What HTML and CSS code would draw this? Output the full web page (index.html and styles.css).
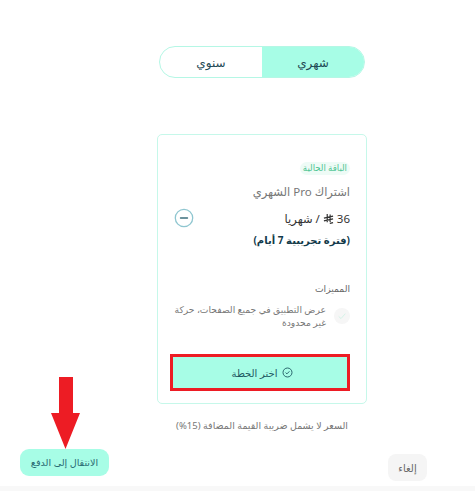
FILE: index.html
```html
<!DOCTYPE html>
<html lang="ar" dir="rtl">
<head>
<meta charset="utf-8">
<title>الخطط</title>
<link rel="stylesheet" href="styles.css">
</head>
<body>
<main class="page">
  <div class="content">
    <div class="toggle">
      <div class="tab tab-active">شهري</div>
      <div class="tab">سنوي</div>
    </div>
    <section class="card">
      <span class="badge">الباقة الحالية</span>
      <h2 class="plan">اشتراك Pro الشهري</h2>
      <div class="price-row">
        <span class="price">36
          <svg class="cur" viewBox="0 0 12 12" width="11" height="11"><path d="M4.6 1v9M7.8 1.6v8.2M1 5.6l10-2.2M1 8.6l10-2.2M7.4 11.4l3.6-.9" fill="none" stroke="#333" stroke-width="1.3"/></svg>
          / شهريا</span>
        <svg class="minus" viewBox="0 0 20 20" width="20" height="20"><circle cx="10" cy="10" r="8.7" fill="none" stroke="#8fc6d0" stroke-width="1.3"/><path d="M6.5 10h7" stroke="#3d6f7d" stroke-width="1.4" stroke-linecap="round"/></svg>
      </div>
      <div class="trial">(فترة تجريبية 7 أيام)</div>
      <div class="features-title">المميزات</div>
      <div class="feature">
        <span class="check"><svg viewBox="0 0 12 12" width="10" height="10"><path d="M2 6.5l2.8 2.6L10 3.2" fill="none" stroke="#d5f3e8" stroke-width="1.2"/></svg></span>
        <p class="feature-text">عرض التطبيق في جميع الصفحات، حركة غير محدودة</p>
      </div>
      <button class="cta">
        <svg viewBox="0 0 12 12" width="11" height="11"><circle cx="6" cy="6" r="4.9" fill="none" stroke="#1f5a63" stroke-width="1"/><path d="M3.9 6.1l1.5 1.4 2.7-2.8" fill="none" stroke="#1f5a63" stroke-width="1"/></svg>
        <span>اختر الخطة</span>
      </button>
    </section>
    <p class="note">السعر لا يشمل ضريبة القيمة المضافة (15%)</p>
  </div>
  <div class="actions">
    <button class="btn-cancel">إلغاء</button>
    <button class="btn-pay">الانتقال إلى الدفع</button>
  </div>
</main>
<svg class="arrow" viewBox="0 0 29 72" width="29" height="72"><path d="M8 0h14v36h7L14.5 72 0 36h8z" fill="#ed1c24"/></svg>
<div class="strip"></div>
</body>
</html>
```
FILE: styles.css
```css
* { box-sizing: border-box; }
html, body { margin: 0; height: 491px; overflow: hidden; background: #fff; }
body { position: relative; font-family: "Noto Sans", "DejaVu Sans", sans-serif; color: #444; }
.page { height: 491px; padding-top: 46px; }
.content { display: flex; flex-direction: column; align-items: center; padding-left: 49px; }
.toggle { display: flex; width: 206px; height: 32px; border: 1.5px solid #b5f7e5; border-radius: 16px; overflow: hidden; font-size: 12px; font-weight: 500; color: #1f4a55; }
.tab { flex: 1; display: flex; align-items: center; justify-content: center; }
.tab-active { background: #a7fde6; flex: 0 0 102px; }
.card { width: 210px; height: 270px; margin-top: 56px; border: 1.5px solid #c6f8ea; border-radius: 5px; padding: 27px 16px 0 16px; display: flex; flex-direction: column; align-items: flex-start; }
.badge { font-size: 8.6px; line-height: 13px; padding: 0 3px; background: #eefbf6; color: #4fc593; border-radius: 7px; }
.plan { margin: 7px 0 0; font-size: 11.5px; line-height: 19px; font-weight: 400; color: #777; }
.price-row { width: 100%; display: flex; justify-content: space-between; align-items: center; margin-top: 6px; height: 22px; }
.price { font-size: 11.5px; color: #333; display: flex; align-items: center; gap: 3px; }
.trial { font-size: 10px; font-weight: 700; color: #123a4a; margin-top: 2px; line-height: 18px; }
.features-title { font-size: 9.2px; color: #666; margin-top: 33px; line-height: 14px; }
.feature { display: flex; align-items: center; gap: 8px; margin-top: 7px; width: 100%; }
.check { width: 16px; height: 16px; border-radius: 50%; background: #f6f6f6; display: flex; align-items: center; justify-content: center; flex: none; }
.feature-text { margin: 0; font-size: 9.2px; line-height: 13px; color: #777; width: 152px; }
.cta { width: 174px; height: 31px; display: flex; align-items: center; justify-content: center; gap: 5px; margin: 28px 3px 0 0; padding: 0 0 0 5px; background: #a7fde6; border: none; outline: 3px solid #ed1c24; font: 500 10px "Noto Sans", "DejaVu Sans", sans-serif; color: #1f5a63; }
.note { margin: 14px 0 0; font-size: 9.5px; line-height: 16px; color: #777; }
.actions { display: flex; justify-content: space-between; align-items: flex-start; padding: 0 48px 0 20px; margin-top: 15px; direction: rtl; }
.btn-cancel { width: 39px; height: 27px; margin-top: 5px; border: none; border-radius: 8px; background: #f5f5f5; color: #666; font: 500 10px "Noto Sans", "DejaVu Sans", sans-serif; }
.btn-pay { width: 89px; height: 27px; border: none; border-radius: 9px; background: #a7fde6; color: #2a6b73; font: 500 9.6px "Noto Sans", "DejaVu Sans", sans-serif; }
.arrow { position: absolute; left: 51px; top: 377px; }
.strip { position: absolute; left: 0; right: 0; bottom: 0; height: 5px; background: #f8f8f8; }
```
